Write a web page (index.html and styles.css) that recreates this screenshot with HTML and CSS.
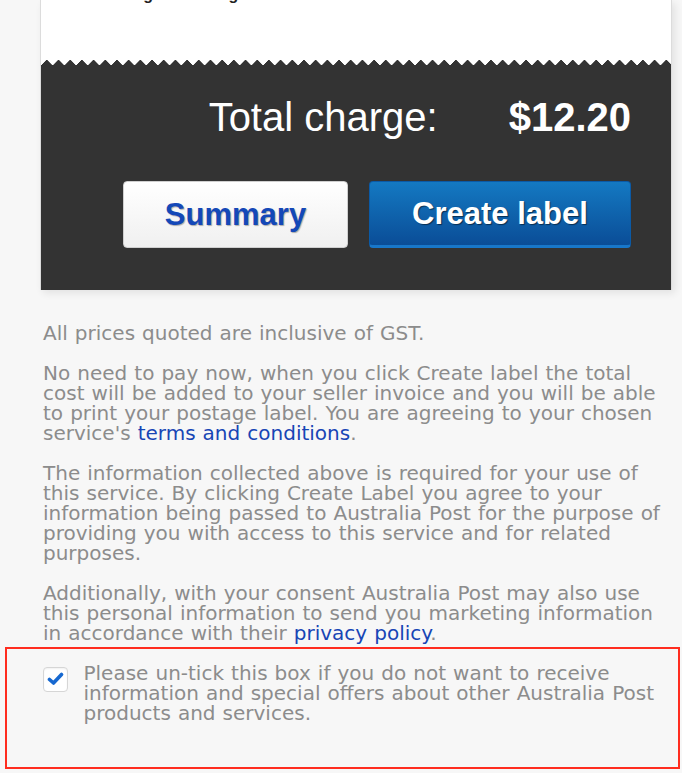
FILE: index.html
```html
<!DOCTYPE html>
<html lang="en">
<head>
<meta charset="utf-8">
<title>Create label</title>
<link rel="stylesheet" href="styles.css">
</head>
<body>
<div class="page">
  <div class="card">
    <div class="card-top">
      <div class="item-row"><span>Parcel weight and height</span></div>
    </div>
    <div class="zigzag"></div>
    <div class="summary-panel">
      <div class="total">
        <span class="total-label">Total charge:</span>
        <span class="total-amount">$12.20</span>
      </div>
      <div class="actions">
        <button class="btn btn-secondary" type="button">Summary</button>
        <button class="btn btn-primary" type="button">Create label</button>
      </div>
    </div>
  </div>

  <div class="notes">
    <p>All prices quoted are inclusive of GST.</p>
    <p>No need to pay now, when you click Create label the total cost will be added to your seller invoice and you will be able to print your postage label. You are agreeing to your chosen service's <a href="#">terms and conditions</a>.</p>
    <p>The information collected above is required for your use of this service. By clicking Create Label you agree to your information being passed to Australia Post for the purpose of providing you with access to this service and for related purposes.</p>
    <p>Additionally, with your consent Australia Post may also use this personal information to send you marketing information in accordance with their <a href="#">privacy policy</a>.</p>
  </div>

  <div class="consent">
    <label class="consent-label">
      <span class="checkbox">
        <svg width="17" height="14" viewBox="0 0 17 14"><path d="M2.5 7.5 L6.5 11 L14.5 2.5" fill="none" stroke="#1668d0" stroke-width="3.6" stroke-linecap="round" stroke-linejoin="round"/></svg>
      </span>
      <span class="consent-text">Please un-tick this box if you do not want to receive information and special offers about other Australia Post products and services.</span>
    </label>
  </div>
</div>
</body>
</html>
```

FILE: styles.css
```css
html, body {
  margin: 0;
  padding: 0;
  background: #f7f7f7;
}

.page {
  width: 682px;
  overflow: hidden;
}

.card {
  margin-left: 40px;
  width: 630px;
  border-left: 1px solid #dcdcdc;
  border-right: 1px solid #dcdcdc;
  background: #fff;
  box-shadow: 3px 3px 8px rgba(0, 0, 0, 0.09);
}

.card-top {
  height: 60px;
  overflow: hidden;
}

.item-row {
  display: flex;
  margin-top: -14px;
  padding: 0 40px 0 24px;
  font: bold 16px/18px "Liberation Sans", Arial, sans-serif;
  color: #222;
}

.zigzag {
  height: 5px;
  background: conic-gradient(from 135deg at 50% 0, #333 90deg, #fff 0) 0 0 / 11.7px 5px repeat-x;
}

.summary-panel {
  background: #333;
  padding: 29px 40px 42px 40px;
}

.total {
  display: flex;
  justify-content: flex-end;
  gap: 71px;
  font: 40px/46px "Liberation Sans", Arial, sans-serif;
  color: #fff;
}

.total-amount {
  font-weight: bold;
}

.actions {
  display: flex;
  justify-content: flex-end;
  gap: 21px;
  margin-top: 41px;
}

.btn {
  height: 67px;
  border-radius: 4px;
  font: bold 31px/1 "Liberation Sans", Arial, sans-serif;
  padding: 0;
  cursor: pointer;
}

.btn-secondary {
  width: 225px;
  color: #1448b8;
  background: linear-gradient(#ffffff, #f0f0f0);
  border: 1px solid #cfcfcf;
  text-shadow: 1px 1px 1px rgba(0, 0, 0, 0.3);
}

.btn-primary {
  width: 262px;
  color: #fff;
  background: linear-gradient(#1479c2, #0a4d97);
  border: 1px solid #0b5aa6;
  border-bottom: 3px solid #1877c9;
  text-shadow: 1px 1px 1px rgba(0, 0, 0, 0.5);
}

.notes {
  padding: 0 16px 0 43px;
  margin-top: 33px;
  font: 20px/20px "DejaVu Sans", Verdana, sans-serif;
  word-spacing: 0.7px;
  color: #8c8c8c;
}

.notes p {
  margin: 0 0 20px 0;
}

.notes p:last-child {
  margin-bottom: 4px;
}

.notes a {
  color: #1745b5;
  text-decoration: none;
}

.consent {
  margin: 0 2px 0 5px;
  height: 122px;
  border: 2.5px solid #ff2d1f;
  box-sizing: border-box;
  padding: 14px 20px 0 35.5px;
}

.consent-label {
  display: flex;
  gap: 16px;
  font: 20px/20px "DejaVu Sans", Verdana, sans-serif;
  word-spacing: 0.7px;
  color: #8c8c8c;
}

.checkbox {
  flex: none;
  width: 23px;
  height: 23px;
  margin-top: 3.5px;
  border: 1px solid #d6d6d6;
  border-radius: 4px;
  background: #fff;
  box-shadow: inset 0 1px 2px rgba(0, 0, 0, 0.06);
  display: flex;
  align-items: center;
  justify-content: center;
}
```
